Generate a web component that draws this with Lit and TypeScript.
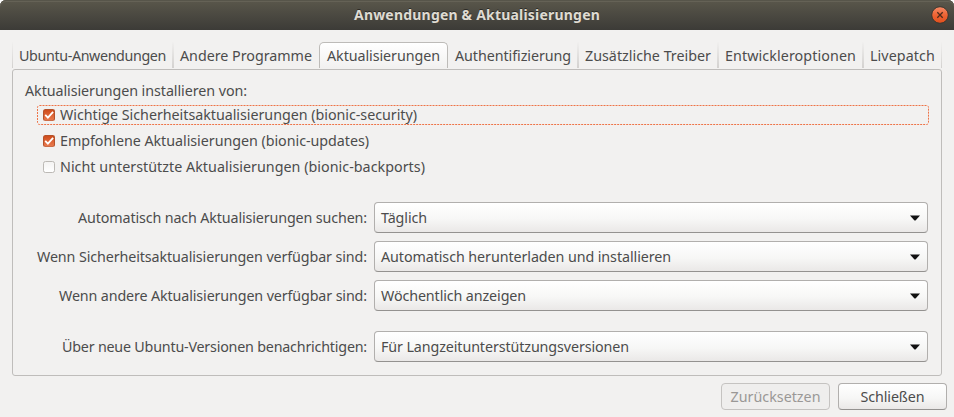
import { LitElement, html, css, nothing } from "lit";
import { customElement, property, query } from "lit/decorators.js";
import { classMap } from "lit/directives/class-map.js";

/** One line of text whose tracking is adjusted so that it spans `span` pixels. */
@customElement("ui-text")
class UiText extends LitElement {
  static styles = css`
    :host { display: block; white-space: pre; }
    .line { display: inline-block; }
  `;
  @property() text = "";
  @property({ type: Number }) span = 0;
  @query(".line") line!: HTMLElement;

  render() {
    return html`<span class="line">${this.text}</span>`;
  }

  updated() {
    this.line.style.letterSpacing = "0px";
    const natural = this.line.getBoundingClientRect().width;
    this.line.style.letterSpacing = `${(this.span - natural) / this.text.length}px`;
  }
}

@customElement("ui-check")
class UiCheck extends LitElement {
  static styles = css`
    :host { display: block; }
    .row {
      display: flex; align-items: center; gap: 5px; position: relative;
      box-sizing: border-box; height: 20px; padding-left: 6px;
    }
    .ring { position: absolute; inset: 0; width: 892px; height: 20px; }
    .box {
      box-sizing: border-box; width: 12px; height: 12px; border-radius: 2.5px;
      border: 1px solid #bcb9b5; background: linear-gradient(#f4f3f2, #fff);
    }
    .box.on { border-color: #b5522b; background: linear-gradient(#cf4c1c, #e8794d); border-bottom-color: #cc6c47; }
    .box svg { display: block; width: 10px; height: 10px; overflow: visible; }
  `;
  @property() text = "";
  @property({ type: Number }) span = 0;
  @property({ type: Boolean }) checked = false;
  @property({ type: Boolean }) focused = false;

  render() {
    return html`<div class="row">
      ${this.focused
        ? html`<svg class="ring" viewBox="0 0 892 20">
            <rect x="0.5" y="0.5" width="891" height="19" rx="2" fill="none" stroke="#ee7347" stroke-dasharray="2 1" />
          </svg>`
        : nothing}
      <span class=${classMap({ box: true, on: this.checked })}>
        ${this.checked
          ? html`<svg viewBox="0 0 10 10"><path d="M1.2 4.8 3.9 7.6 9.1 1.8" fill="none" stroke="#fff" stroke-width="1.8" /></svg>`
          : nothing}
      </span>
      <ui-text .text=${this.text} .span=${this.span}></ui-text>
    </div>`;
  }
}

const TABS = [
  { text: "Ubuntu-Anwendungen", span: 147 },
  { text: "Andere Programme", span: 132 },
  { text: "Aktualisierungen", span: 113, active: true },
  { text: "Authentifizierung", span: 116 },
  { text: "Zusätzliche Treiber", span: 126 },
  { text: "Entwickleroptionen", span: 131 },
  { text: "Livepatch", span: 65 },
];

const CHECKS = [
  { text: "Wichtige Sicherheitsaktualisierungen (bionic-security)", span: 357, on: true, focus: true },
  { text: "Empfohlene Aktualisierungen (bionic-updates)", span: 309, on: true },
  { text: "Nicht unterstützte Aktualisierungen (bionic-backports)", span: 365 },
];

const SELECTS = [
  { label: "Automatisch nach Aktualisierungen suchen:", ls: 289, value: "Täglich", vs: 46 },
  { label: "Wenn Sicherheitsaktualisierungen verfügbar sind:", ls: 330, value: "Automatisch herunterladen und installieren", vs: 290 },
  { label: "Wenn andere Aktualisierungen verfügbar sind:", ls: 308, value: "Wöchentlich anzeigen", vs: 145 },
  { label: "Über neue Ubuntu-Versionen benachrichtigen:", ls: 305, value: "Für Langzeitunterstützungsversionen", vs: 248, apart: true },
];

@customElement("app-root")
class AppRoot extends LitElement {
  static styles = css`
    :host {
      display: flex; flex-direction: column; box-sizing: border-box;
      width: 954px; height: 417px; overflow: hidden; background: #f2f1f0; color: #4c4c4c;
      font: 14.3px/20px "Noto Sans", "Open Sans", sans-serif;
    }
    .corners { height: 30px; background: #fff; }
    .bar {
      display: grid; grid-template-columns: 1fr auto 1fr; align-items: center;
      box-sizing: border-box; height: 30px; padding-right: 5px; padding-left: 5px;
      border-radius: 6px 6px 0 0; color: #dfdbd2; font-weight: 700; font-size: 14px;
      background: linear-gradient(#5a574b, #3c3b37);
      box-shadow: inset 0 1px #57554a, inset 0 2px #656256;
      text-shadow: 0 -1px #2c2b27;
    }
    .title { grid-column: 2; }
    .close { justify-self: end; width: 18px; height: 18px; display: block; }
    .tabs {
      display: grid; grid-template-columns: 161px 146px 129px 130px 140px 145px 79px;
      margin: 12px 12px 0; height: 26px;
    }
    .tab {
      box-sizing: border-box; padding: 4px 0 0 6px; border: solid transparent; border-width: 0 1px;
      border-image: linear-gradient(#f2f1f0, #d2d0ce) 1;
    }
    .tab.active {
      border: 1px solid #bdbbb8; border-bottom: 0; border-image: none; border-radius: 5px 5px 0 0;
      padding: 3px 0 0 7px; background: linear-gradient(#fff, #f2f1f0);
    }
    .beside { border-right-width: 0; }
    .after { border-left-width: 0; padding-left: 7px; }
    .panel {
      box-sizing: border-box; width: 930px; height: 307px; margin: 1px 12px 0;
      border: 1px solid #bfbdbb; border-radius: 3px; padding: 11px 12px 0;
    }
    .checks { display: flex; flex-direction: column; gap: 6px; margin: 4px 0 0 12px; }
    .form { display: flex; flex-direction: column; gap: 8px; margin-top: 25px; }
    .field { display: grid; grid-template-columns: 342px 554px; column-gap: 7px; align-items: center; }
    .field.apart { margin-top: 12px; }
    .label { justify-self: end; }
    .select, .button {
      display: flex; align-items: center; box-sizing: border-box;
      border: 1px solid #b1afad; border-bottom-color: #949290; border-radius: 4px;
      background: linear-gradient(#fff, #f7f7f6 55%, #eae8e7);
    }
    .select { justify-content: space-between; height: 31px; padding: 0 7px 0 6px; }
    .arrow { display: block; width: 10px; height: 6px; }
    .actions { display: flex; justify-content: flex-end; gap: 8px; margin: 7px 7px 0; }
    .button { justify-content: center; width: 109px; height: 27px; }
    .button.off { color: #9a9896; border-color: #c5c3c1; background: #efeeed; }
  `;

  closeIcon() {
    return html`<svg class="close" viewBox="0 0 18 18">
      <defs>
        <linearGradient id="orb" x2="0" y2="1">
          <stop offset="0" stop-color="#f58b68" /><stop offset=".5" stop-color="#ee6434" /><stop offset="1" stop-color="#e04e1c" />
        </linearGradient>
      </defs>
      <circle cx="9" cy="9" r="8.3" fill="url(#orb)" stroke="#38362f" />
      <path d="M6.3 6.3 11.7 11.7M11.7 6.3 6.3 11.7" stroke="#4e2a1b" stroke-width="1.3" />
    </svg>`;
  }

  render() {
    return html`
      <div class="corners">
        <header class="bar">
          <ui-text class="title" .text=${"Anwendungen & Aktualisierungen"} .span=${246}></ui-text>
          ${this.closeIcon()}
        </header>
      </div>
      <nav class="tabs">
        ${TABS.map((t, i) => html`<div class=${classMap({ tab: true, active: !!t.active, beside: !!TABS[i + 1]?.active, after: !!TABS[i - 1]?.active })}>
          <ui-text .text=${t.text} .span=${t.span}></ui-text>
        </div>`)}
      </nav>
      <main class="panel">
        <ui-text .text=${"Aktualisierungen installieren von:"} .span=${222}></ui-text>
        <div class="checks">
          ${CHECKS.map((c) => html`<ui-check .text=${c.text} .span=${c.span} .checked=${!!c.on} .focused=${!!c.focus}></ui-check>`)}
        </div>
        <div class="form">
          ${SELECTS.map((s) => html`<div class=${classMap({ field: true, apart: !!s.apart })}>
            <ui-text class="label" .text=${s.label} .span=${s.ls}></ui-text>
            <div class="select">
              <ui-text .text=${s.value} .span=${s.vs}></ui-text>
              <svg class="arrow" viewBox="0 0 10 6"><path d="M0 .5H10L6 5Q5 6 4 5Z" fill="#111" /></svg>
            </div>
          </div>`)}
        </div>
      </main>
      <footer class="actions">
        <div class="button off"><ui-text .text=${"Zurücksetzen"} .span=${90}></ui-text></div>
        <div class="button"><ui-text .text=${"Schließen"} .span=${64}></ui-text></div>
      </footer>
    `;
  }
}
